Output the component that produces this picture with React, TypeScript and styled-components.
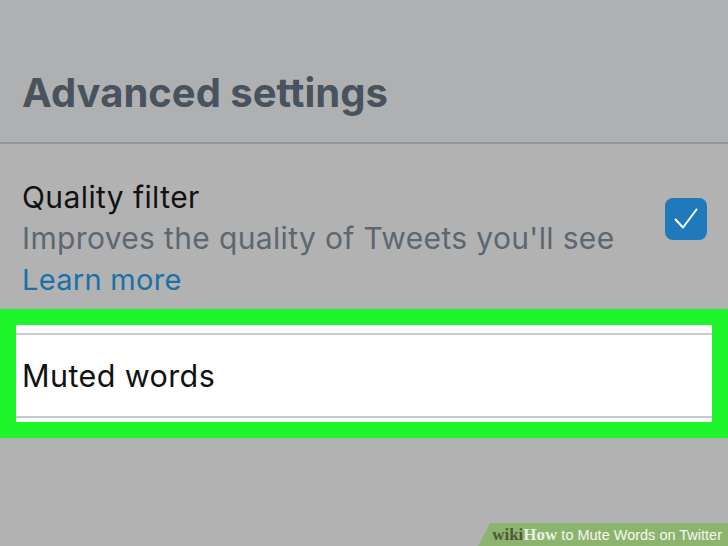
import styled, { createGlobalStyle } from "styled-components";

const GlobalStyle = createGlobalStyle`
  html, body {
    margin: 0;
    padding: 0;
  }
  body {
    font-family: Inter, "Noto Sans", sans-serif;
  }
`;

const App = () => {
  return (
    <>
      <GlobalStyle />
      <Screen>
        <Header>
          <Title>Advanced settings</Title>
        </Header>
        <SettingRow>
          <SettingText>
            <SettingLabel>Quality filter</SettingLabel>
            <SettingHint>Improves the quality of Tweets you'll see</SettingHint>
            <LearnMore>Learn more</LearnMore>
          </SettingText>
          <CheckBox>
            <svg width="24" height="22" viewBox="0 0 24 22" fill="none">
              <path
                d="M1.5 11.5 L9 19.5 L22.5 1.5"
                stroke="#fff"
                strokeWidth="2"
                strokeLinecap="round"
                strokeLinejoin="round"
              />
            </svg>
          </CheckBox>
        </SettingRow>
        <Highlight>
          <Panel>
            <MenuItem>Muted words</MenuItem>
          </Panel>
        </Highlight>
        <Badge>
          <BadgeWiki>wiki</BadgeWiki>
          <BadgeHow>How</BadgeHow>
          <BadgeTitle> to Mute Words on Twitter</BadgeTitle>
        </Badge>
      </Screen>
    </>
  );
};

const Screen = styled.div`
  position: relative;
  width: 728px;
  height: 546px;
  overflow: hidden;
  background: #b2b2b3;
`;

const Header = styled.div`
  height: 144px;
  padding: 0 22px;
  box-sizing: border-box;
  display: flex;
  align-items: flex-end;
  background: #afb0b2;
  border-bottom: 2px solid #8e969d;
`;

const Title = styled.h1`
  margin: 0 0 26px;
  font-size: 40px;
  font-weight: 700;
  line-height: 46px;
  color: #48535d;
`;

const SettingRow = styled.div`
  display: flex;
  align-items: flex-start;
  justify-content: space-between;
  padding: 33px 21px 0 22px;
`;

const SettingText = styled.div`
  display: flex;
  flex-direction: column;
`;

const SettingLabel = styled.div`
  font-size: 30px;
  line-height: 41px;
  letter-spacing: 0.4px;
  color: #111;
`;

const SettingHint = styled.div`
  font-size: 30px;
  line-height: 41px;
  letter-spacing: 0.35px;
  color: #5d6770;
`;

const LearnMore = styled.a`
  font-size: 29px;
  line-height: 41px;
  letter-spacing: 0.3px;
  color: #1b70a8;
  cursor: pointer;
`;

const CheckBox = styled.div`
  width: 42px;
  height: 42px;
  margin-top: 21px;
  border-radius: 8px;
  background: #1f79ba;
  display: flex;
  align-items: center;
  justify-content: center;
`;

const Highlight = styled.div`
  margin-top: 9px;
  background: #1ff52d;
  padding: 16px 16px 16px 16px;
`;

const Panel = styled.div`
  background: #fff;
  padding: 8px 0 4px;
`;

const MenuItem = styled.div`
  height: 81px;
  border-top: 2px solid #c6cbd3;
  border-bottom: 2px solid #c6cbd3;
  display: flex;
  align-items: center;
  padding-left: 6px;
  font-size: 30.5px;
  letter-spacing: 0.4px;
  color: #111;
`;

const Badge = styled.div`
  position: absolute;
  right: 0;
  bottom: 0;
  height: 23px;
  padding: 0 6px 0 14px;
  background: #8db46f;
  clip-path: polygon(12px 0, 100% 0, 100% 100%, 0 100%);
  display: flex;
  align-items: center;
  white-space: nowrap;
`;

const BadgeWiki = styled.span`
  font-family: "Liberation Serif", serif;
  font-weight: 700;
  font-size: 17px;
  color: #4b5a3b;
`;

const BadgeHow = styled.span`
  font-family: "Liberation Serif", serif;
  font-weight: 700;
  font-size: 17px;
  color: #e9f1e2;
`;

const BadgeTitle = styled.span`
  font-family: "Liberation Sans", sans-serif;
  font-size: 14.5px;
  color: #f4f8f0;
  white-space: pre;
`;

export default App;
